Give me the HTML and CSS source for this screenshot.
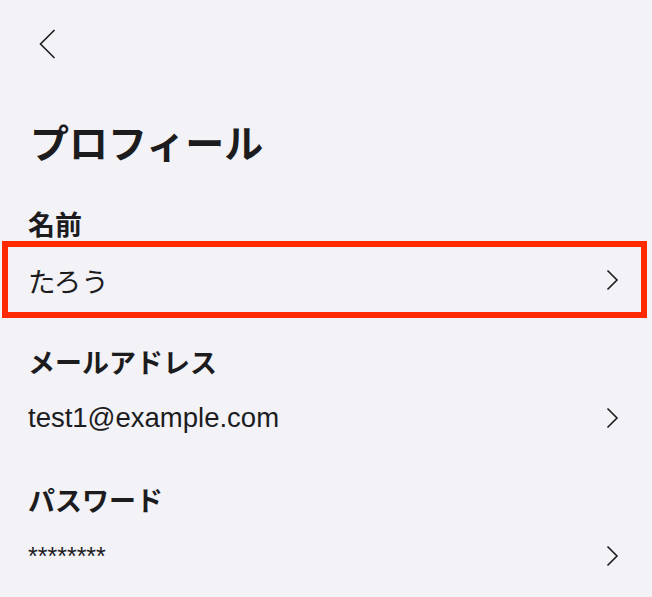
FILE: index.html
```html
<!DOCTYPE html>
<html lang="ja">
<head>
  <meta charset="UTF-8" />
  <title>プロフィール</title>
  <link rel="stylesheet" href="styles.css">
</head>
<body>
  <div class="nav">
    <button class="back" aria-label="戻る">
      <svg width="17" height="30" viewBox="0 0 17 30"><path d="M15.5 1 L1.5 15 L15.5 29" fill="none" stroke="#1c1c1e" stroke-width="1.6" /></svg>
    </button>
  </div>

  <h1 class="title">プロフィール</h1>

  <div class="field">
    <div class="field-label">名前</div>
    <div class="field-row is-selected">
      <span class="field-value">たろう</span>
      <svg class="chevron" width="13" height="22" viewBox="0 0 13 22"><path d="M1.5 1.5 L11 11 L1.5 20.5" fill="none" stroke="#1c1c1e" stroke-width="1.6" /></svg>
    </div>
  </div>

  <div class="field">
    <div class="field-label">メールアドレス</div>
    <div class="field-row">
      <span class="field-value">test1@example.com</span>
      <svg class="chevron" width="13" height="22" viewBox="0 0 13 22"><path d="M1.5 1.5 L11 11 L1.5 20.5" fill="none" stroke="#1c1c1e" stroke-width="1.6" /></svg>
    </div>
  </div>

  <div class="field">
    <div class="field-label">パスワード</div>
    <div class="field-row">
      <span class="field-value password">********</span>
      <svg class="chevron" width="13" height="22" viewBox="0 0 13 22"><path d="M1.5 1.5 L11 11 L1.5 20.5" fill="none" stroke="#1c1c1e" stroke-width="1.6" /></svg>
    </div>
  </div>
</body>
</html>
```

FILE: styles.css
```css
body {
  margin: 0;
  background: #f2f2f7;
  color: #1c1c1e;
  font-family: "Liberation Sans", "Noto Sans CJK JP", sans-serif;
}
.nav {
  height: 44px;
  padding: 22px 0 0 39px;
  display: flex;
  align-items: center;
}
.back {
  background: none;
  border: none;
  padding: 0;
  display: flex;
  cursor: pointer;
}
.title {
  margin: 53px 0 0;
  padding-left: 30px;
  font-size: 39px;
  line-height: 52px;
  font-weight: bold;
}
.field {
  margin-top: 37px;
}
.field + .field {
  margin-top: 34px;
}
.field-label {
  padding-left: 28px;
  font-size: 27px;
  font-weight: bold;
  line-height: 36px;
}
.field-row {
  margin-top: 4px;
  height: 64px;
  padding: 0 33px 0 28px;
  display: flex;
  align-items: center;
  justify-content: space-between;
}
.field-row.is-selected {
  margin: -3px 5px -6px 2px;
  height: 65px;
  border: 6px solid #ff2a00;
  padding: 0 22px 0 20px;
}
.field-value {
  font-size: 27.5px;
}
.field-value.password {
  font-size: 25px;
}
.chevron {
  flex-shrink: 0;
}
```
